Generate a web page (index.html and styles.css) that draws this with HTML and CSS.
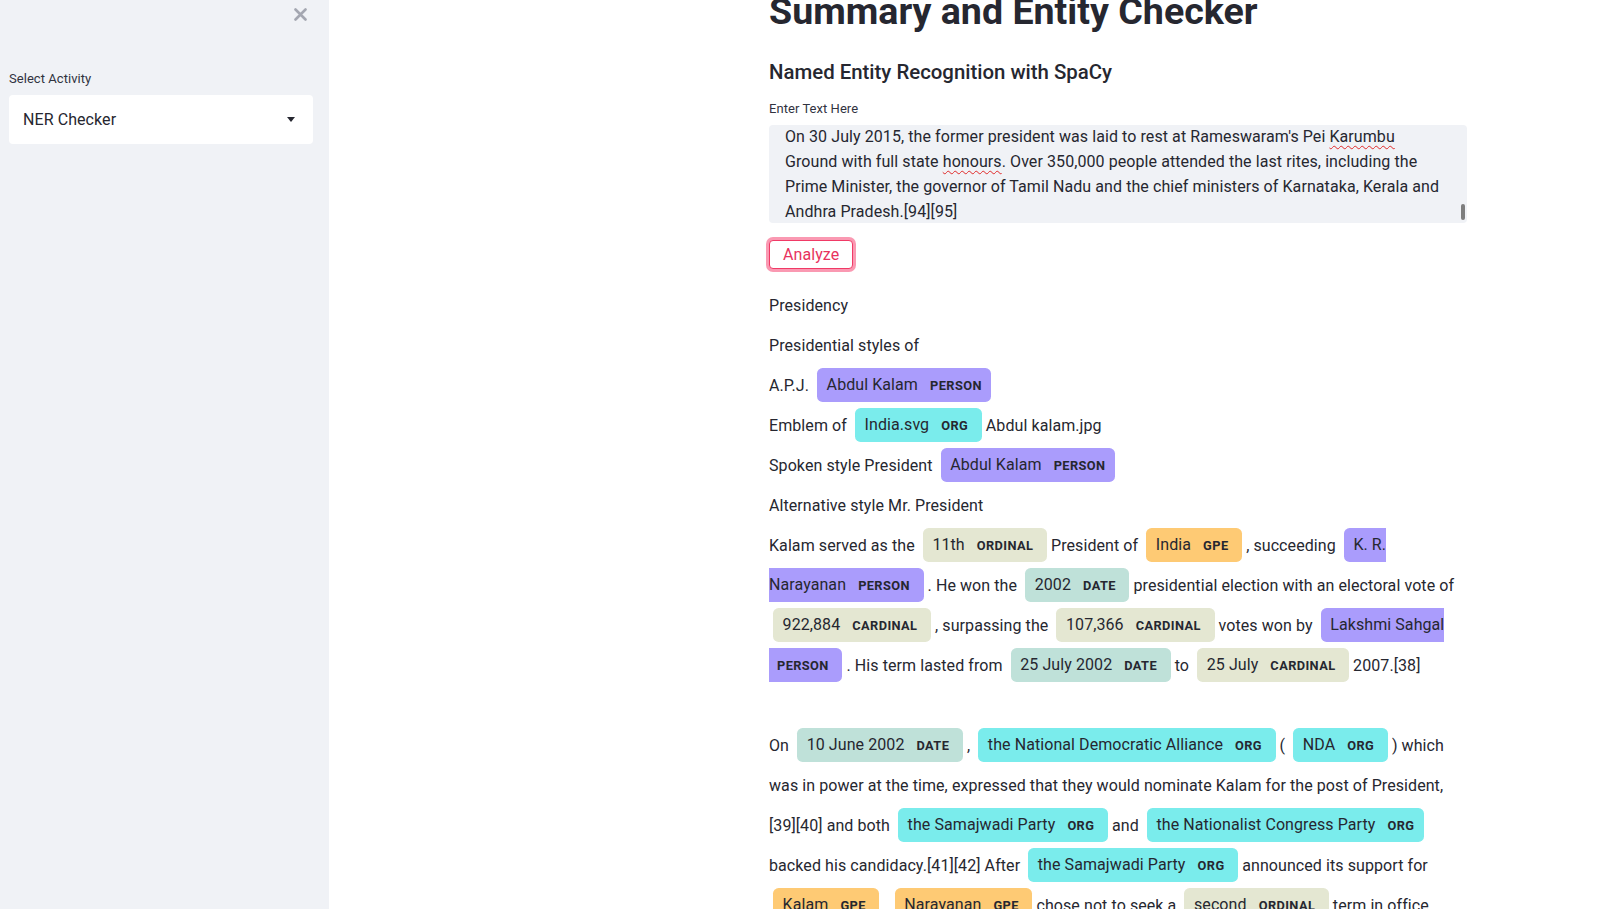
FILE: index.html
```html
<!DOCTYPE html>
<html lang="en">
<head>
<meta charset="utf-8">
<title>Summary and Entity Checker</title>
<link rel="stylesheet" href="styles.css">
</head>
<body>
<div class="app">
  <aside class="sidebar">
    <div class="sb-head">
      <button class="close" aria-label="Close sidebar">
        <svg width="13" height="13" viewBox="0 0 13 13"><path d="M1.5 1.5 L11.5 11.5 M11.5 1.5 L1.5 11.5" stroke="#a4a7b1" stroke-width="2.6" stroke-linecap="round" fill="none"/></svg>
      </button>
    </div>
    <div class="sb-label">Select Activity</div>
    <div class="select">
      <span class="select-value">NER Checker</span>
      <svg class="caret" width="8" height="5" viewBox="0 0 8 5"><path d="M0 0 L8 0 L4 5 Z" fill="#262730"/></svg>
    </div>
  </aside>
  <main class="main">
    <div class="block">
      <h1 class="title">Summary and Entity Checker</h1>
      <h3 class="subtitle">Named Entity Recognition with SpaCy</h3>
      <div class="field-label">Enter Text Here</div>
      <div class="textarea">
        <div class="ta-text">On 30 July 2015, the former president was laid to rest at Rameswaram's Pei <span class="sp">Karumbu</span><br>Ground with full state <span class="sp">honours</span>. Over 350,000 people attended the last rites, including the<br>Prime Minister, the governor of Tamil Nadu and the chief ministers of Karnataka, Kerala and<br>Andhra Pradesh.[94][95]</div>
        <div class="thumb"></div>
      </div>
      <button class="btn">Analyze</button>
      <div class="entities">Presidency<br>Presidential styles of<br>A.P.J. <mark class="ent person"> Abdul Kalam <span class="lbl">PERSON</span> </mark><br>Emblem of <mark class="ent org"> India.svg <span class="lbl">ORG</span> </mark> Abdul kalam.jpg<br>Spoken style President <mark class="ent person"> Abdul Kalam <span class="lbl">PERSON</span> </mark><br>Alternative style Mr. President<br>Kalam served as the <mark class="ent card"> 11th <span class="lbl">ORDINAL</span> </mark> President of <mark class="ent gpe"> India <span class="lbl">GPE</span> </mark> , succeeding <mark class="ent person"> K. R.<br>Narayanan <span class="lbl">PERSON</span> </mark> . He won the <mark class="ent date"> 2002 <span class="lbl">DATE</span> </mark> presidential election with an electoral vote of<br><mark class="ent card"> 922,884 <span class="lbl">CARDINAL</span> </mark> , surpassing the <mark class="ent card"> 107,366 <span class="lbl">CARDINAL</span> </mark> votes won by <mark class="ent person"> Lakshmi Sahgal<br><span class="lbl">PERSON</span> </mark> . His term lasted from <mark class="ent date"> 25 July 2002 <span class="lbl">DATE</span> </mark> to <mark class="ent card"> 25 July <span class="lbl">CARDINAL</span> </mark> 2007.[38]<br><br>On <mark class="ent date"> 10 June 2002 <span class="lbl">DATE</span> </mark> , <mark class="ent org"> the National Democratic Alliance <span class="lbl">ORG</span> </mark> ( <mark class="ent org"> NDA <span class="lbl">ORG</span> </mark> ) which<br>was in power at the time, expressed that they would nominate Kalam for the post of President,<br>[39][40] and both <mark class="ent org"> the Samajwadi Party <span class="lbl">ORG</span> </mark> and <mark class="ent org"> the Nationalist Congress Party <span class="lbl">ORG</span> </mark><br>backed his candidacy.[41][42] After <mark class="ent org"> the Samajwadi Party <span class="lbl">ORG</span> </mark> announced its support for<br><mark class="ent gpe"> Kalam <span class="lbl">GPE</span> </mark> , <mark class="ent gpe"> Narayanan <span class="lbl">GPE</span> </mark> chose not to seek a <mark class="ent card"> second <span class="lbl">ORDINAL</span> </mark> term in office, leaving the field open for him.</div>
    </div>
  </main>
</div>
</body>
</html>
```
FILE: styles.css
```css
html, body {
  margin: 0;
  padding: 0;
}
body {
  font-family: Roboto, "Liberation Sans", sans-serif;
  color: #262730;
  background: #ffffff;
}
.app {
  display: flex;
  height: 909px;
  overflow: hidden;
}

/* Sidebar */
.sidebar {
  width: 329px;
  flex: none;
  box-sizing: border-box;
  background: #f0f2f6;
  padding: 0 16px 0 9px;
  display: flex;
  flex-direction: column;
}
.sb-head {
  height: 28px;
  display: flex;
  justify-content: flex-end;
  align-items: center;
  padding-right: 6px;
}
.close {
  border: 0;
  background: none;
  padding: 0;
  width: 13px;
  height: 13px;
  display: flex;
  cursor: pointer;
}
.sb-label {
  margin-top: 43px;
  font-size: 13px;
  line-height: 16px;
  letter-spacing: 0.05px;
  color: #31333f;
}
.select {
  margin-top: 8px;
  height: 49px;
  background: #ffffff;
  border-radius: 4px;
  display: flex;
  align-items: center;
  justify-content: space-between;
  padding: 0 18px 0 14px;
}
.select-value {
  font-size: 16px;
  line-height: 20px;
  letter-spacing: 0.08px;
}

/* Main */
.main {
  flex: 1;
  padding-left: 440px;
}
.block {
  width: 698px;
}
.title {
  margin: -11px 0 0 0;
  font-size: 37.6px;
  line-height: 45px;
  font-weight: 700;
}
.subtitle {
  margin: 24px 0 0 0;
  font-size: 20.4px;
  line-height: 28px;
  font-weight: 500;
}
.field-label {
  margin-top: 14.5px;
  font-size: 13px;
  line-height: 16px;
  letter-spacing: 0.05px;
  color: #31333f;
}
.textarea {
  margin-top: 8.5px;
  height: 98px;
  box-sizing: border-box;
  background: #f0f2f6;
  border-radius: 4px;
  padding: 0 16px;
  overflow: hidden;
  position: relative;
}
.ta-text {
  margin-top: -1px;
  font-size: 16px;
  line-height: 25px;
  letter-spacing: 0.08px;
  white-space: nowrap;
}
.sp {
  text-decoration: underline wavy #e02a2a;
  text-decoration-thickness: 1px;
  text-underline-offset: 3px;
  text-decoration-skip-ink: none;
}
.thumb {
  position: absolute;
  right: 2px;
  bottom: 3px;
  width: 4px;
  height: 16px;
  border-radius: 2px;
  background: #7e7e7e;
}
.btn {
  margin-top: 17px;
  height: 29px;
  box-sizing: border-box;
  padding: 0 13px;
  border: 1px solid #f03a66;
  border-radius: 4px;
  background: #ffffff;
  color: #e8325e;
  font-family: Roboto, "Liberation Sans", sans-serif;
  font-size: 16px;
  line-height: 20px;
  letter-spacing: 0.08px;
  box-shadow: 0 0 0 3px rgba(246, 51, 102, 0.5);
  display: block;
  cursor: pointer;
}

/* displaCy entities */
.entities {
  margin-top: 16.5px;
  font-size: 16px;
  line-height: 2.5;
  letter-spacing: 0.08px;
  direction: ltr;
}
.ent {
  color: inherit;
  padding: 0.45em 0.6em;
  margin: 0 0.25em;
  line-height: 1;
  border-radius: 0.35em;
}
.lbl {
  font-size: 0.8em;
  font-weight: bold;
  line-height: 1;
  border-radius: 0.35em;
  vertical-align: middle;
  margin-left: 0.5rem;
  letter-spacing: 0.4px;
}
.person { background: #aa9cfc; }
.org { background: #7aecec; }
.gpe { background: #feca74; }
.date { background: #bfe1d9; }
.card { background: #e4e7d2; }
```
